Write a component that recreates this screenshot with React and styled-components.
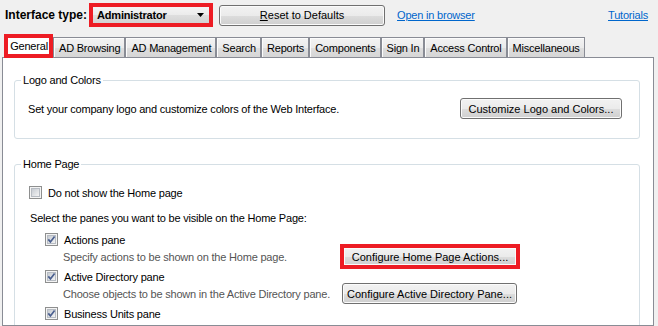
import React from 'react';
import styled, { createGlobalStyle } from 'styled-components';

const RED = '#ed1c24';

const GlobalStyle = createGlobalStyle`
  html, body { margin: 0; padding: 0; }
  body {
    background: #f0f0f0;
    font-family: "Liberation Sans", Arial, sans-serif;
    font-size: 11px;
    letter-spacing: -0.2px;
    color: #000;
  }
`;

const Window = styled.div`
  width: 658px;
  height: 326px;
  overflow: hidden;
  display: flex;
  flex-direction: column;
`;

const TopBar = styled.div`
  height: 30px;
  flex-shrink: 0;
  display: flex;
  align-items: center;
  padding: 0 10px 0 5px;
`;

const Label = styled.span`
  font-weight: bold;
  font-size: 12px;
  letter-spacing: 0;
  margin-right: 2px;
`;

const Combo = styled.div`
  box-sizing: border-box;
  width: 124px;
  height: 24px;
  margin-top: -1px;
  border: 4px solid ${RED};
  background: linear-gradient(#f4f4f4 0%, #ebebeb 50%, #dedede 51%, #d3d3d3 100%);
  display: flex;
  align-items: center;
  justify-content: space-between;
  padding: 0 5px 0 4px;
  font-weight: bold;
`;

const Button = styled.button`
  box-sizing: border-box;
  width: ${p => p.$w}px;
  height: ${p => (p.$marked ? 25 : 21)}px;
  margin: 0 0 0 ${p => p.$ml || 0}px;
  padding: 0;
  flex-shrink: 0;
  font: inherit;
  color: #000;
  border: ${p => (p.$marked ? `4px solid ${RED}` : '1px solid #707070')};
  border-radius: ${p => (p.$marked ? 0 : 3)}px;
  background: linear-gradient(#f2f2f2 0%, #ebebeb 50%, #dddddd 51%, #cfcfcf 100%);
  box-shadow: inset 0 0 0 1px #fbfbfb;
  display: inline-flex;
  align-items: center;
  justify-content: center;
`;

const Link = styled.a`
  color: #0066cc;
  text-decoration: underline;
  margin-left: ${p => p.$ml || 0}px;
`;

const Spacer = styled.div`
  flex: 1;
`;

const TabStrip = styled.div`
  height: 27px;
  flex-shrink: 0;
  display: flex;
  align-items: flex-end;
  padding-left: 4px;
  position: relative;
  z-index: 1;
`;

const Tab = styled.div`
  box-sizing: border-box;
  height: ${p => (p.$active ? 24 : 20)}px;
  ${p => (p.$active ? 'width: 49px; margin-bottom: -1px;' : '')}
  padding: 0 4px 0 5px;
  display: flex;
  align-items: center;
  justify-content: center;
  white-space: nowrap;
  border: ${p => (p.$active ? `4px solid ${RED}` : '1px solid #898c95')};
  border-bottom-width: ${p => (p.$active ? 4 : 0)}px;
  background: ${p => (p.$active ? '#fff' : 'linear-gradient(#f3f3f3 0%, #ebebeb 50%, #dedede 51%, #d6d6d6 100%)')};
  box-shadow: ${p => (p.$active ? 'none' : 'inset 1px 1px 0 #fcfcfc')};
`;

const Panel = styled.div`
  flex: 1;
  box-sizing: border-box;
  width: 652px;
  margin-left: 2px;
  background: #fff;
  border: 1px solid #898c95;
  padding: 15px 13px 0 11px;
  overflow: hidden;
`;

const GroupBox = styled.fieldset`
  margin: 0;
  padding: 0;
  min-width: 0;
  border: 1px solid #d5dfe5;
  border-radius: 3px;
  & + & {
    margin-top: 18px;
  }
`;

const Legend = styled.legend`
  margin-left: 6px;
  padding: 0 2px;
  line-height: 14px;
`;

const LogoRow = styled.div`
  display: flex;
  align-items: center;
  justify-content: space-between;
  padding: 11px 17px 19px 13px;
`;

const HomeBody = styled.div`
  padding: 13px 0 20px 14px;
`;

const CheckRow = styled.div`
  height: 17px;
  display: flex;
  align-items: center;
  gap: 6px;
`;

const Note = styled.div`
  line-height: 14px;
  margin: 10px 0 6px 1px;
`;

const Panes = styled.div`
  padding-left: 16px;
`;

const Pane = styled.div`
  margin-bottom: 3px;
`;

const HintRow = styled.div`
  height: 17px;
  display: flex;
  align-items: center;
  padding-left: 18px;
`;

const Hint = styled.span`
  width: 279px;
  flex-shrink: 0;
  white-space: nowrap;
  color: #555;
`;

const Arrow = () => (
  <svg width="7" height="4" viewBox="0 0 7 4">
    <polygon points="0,0 7,0 3.5,4" fill="#000" />
  </svg>
);

const CheckBox = ({ checked }) => (
  <svg width="13" height="13" viewBox="0 0 13 13" style={{ flexShrink: 0 }}>
    <defs>
      <linearGradient id="cbFill" x1="0" y1="0" x2="1" y2="1">
        <stop offset="0" stopColor="#c4c9d0" />
        <stop offset="1" stopColor="#f6f6f6" />
      </linearGradient>
    </defs>
    <rect x="0.5" y="0.5" width="12" height="12" fill="#f4f4f4" stroke="#8e8f8f" />
    <rect x="2.5" y="2.5" width="8" height="8" fill="url(#cbFill)" stroke="#b7bcc3" />
    {checked && (
      <path d="M3.3 6.4 L5.4 8.9 L9.6 3.4" stroke="#4a5f8f" strokeWidth="1.7" fill="none" />
    )}
  </svg>
);

const panes = [
  {
    name: 'Actions pane',
    hint: 'Specify actions to be shown on the Home page.',
    action: 'Configure Home Page Actions...',
    marked: true,
  },
  {
    name: 'Active Directory pane',
    hint: 'Choose objects to be shown in the Active Directory pane.',
    action: 'Configure Active Directory Pane...',
  },
  { name: 'Business Units pane' },
];

const tabs = [
  'General',
  'AD Browsing',
  'AD Management',
  'Search',
  'Reports',
  'Components',
  'Sign In',
  'Access Control',
  'Miscellaneous',
];

const App = () => (
  <Window>
    <GlobalStyle />
    <TopBar>
      <Label>Interface type:</Label>
      <Combo>
        <span>Administrator</span>
        <Arrow />
      </Combo>
      <Button $w={166} $ml={6}>
        <span>
          <u>R</u>eset to Defaults
        </span>
      </Button>
      <Link $ml={12}>Open in browser</Link>
      <Spacer />
      <Link>Tutorials</Link>
    </TopBar>

    <TabStrip>
      {tabs.map((t, i) => (
        <Tab key={t} $active={i === 0}>
          {t}
        </Tab>
      ))}
    </TabStrip>

    <Panel>
      <GroupBox>
        <Legend>Logo and Colors</Legend>
        <LogoRow>
          <span>Set your company logo and customize colors of the Web Interface.</span>
          <Button $w={162}>Customize Logo and Colors...</Button>
        </LogoRow>
      </GroupBox>

      <GroupBox>
        <Legend>Home Page</Legend>
        <HomeBody>
          <CheckRow>
            <CheckBox />
            <span>Do not show the Home page</span>
          </CheckRow>
          <Note>Select the panes you want to be visible on the Home Page:</Note>
          <Panes>
            {panes.map(p => (
              <Pane key={p.name}>
                <CheckRow>
                  <CheckBox checked />
                  <span>{p.name}</span>
                </CheckRow>
                {p.hint && (
                  <HintRow>
                    <Hint>{p.hint}</Hint>
                    <Button $w={p.marked ? 180 : 175} $ml={p.marked ? -2 : 0} $marked={p.marked}>
                      {p.action}
                    </Button>
                  </HintRow>
                )}
              </Pane>
            ))}
          </Panes>
        </HomeBody>
      </GroupBox>
    </Panel>
  </Window>
);

export default App;
